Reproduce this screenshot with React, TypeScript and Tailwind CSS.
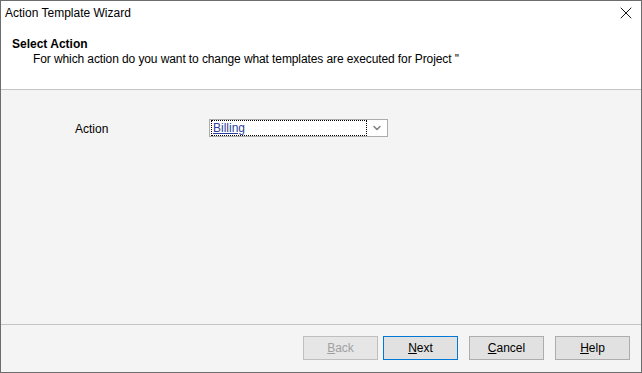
import { ChevronDown, X } from 'lucide-react';

const font = { fontFamily: '"Liberation Sans", Arial, sans-serif' };

function WizButton({ label, first, primary, disabled }: { label: string; first: string; primary?: boolean; disabled?: boolean }) {
  const rest = label.slice(1);
  return (
    <button
      disabled={disabled}
      className={`flex h-[24px] w-[75px] items-center justify-center border text-[12px] ${
        disabled
          ? 'border-[#bfbfbf] bg-[#e6e6e6] text-[#a0a0a0]'
          : primary
            ? 'border-[#0078d7] bg-[#e1e1e1] text-black'
            : 'border-[#adadad] bg-[#e1e1e1] text-black'
      }`}
    >
      <span>
        <span className="underline">{first}</span>
        {rest}
      </span>
    </button>
  );
}

export default function App() {
  return (
    <div style={font} className="flex h-[373px] w-[642px] flex-col border border-[#6d6d6d] bg-white text-[12px] text-black">
      {/* Title bar */}
      <div className="flex h-[24px] shrink-0 items-center justify-between pl-[4px] pr-[5px]">
        <span>Action Template Wizard</span>
        <X className="h-[20px] w-[20px] text-black" strokeWidth={1.1} />
      </div>

      {/* Header */}
      <div className="h-[65px] shrink-0 border-b border-[#c4c4c4] bg-white pl-[11px] pt-[12px]">
        <div className="text-[12px] font-bold leading-[14px]">Select Action</div>
        <div className="mt-[1px] pl-[21px] leading-[14px] tracking-[-0.1px]">For which action do you want to change what templates are executed for Project ''</div>
      </div>

      {/* Body */}
      <div className="flex-1 bg-[#f4f4f4] pl-[74px] pt-[27px]">
        <div className="flex items-center">
          <span className="w-[134px] pt-[3px]">Action</span>
          <div className="flex h-[18px] w-[179px] items-center border border-[#acacac] bg-white pl-[1px] pr-[4px]">
            <div className="flex h-[16px] flex-1 items-center border border-dotted border-black pl-[1px] text-[#2c3f9e] underline">
              Billing
            </div>
            <ChevronDown className="ml-[4px] h-[12px] w-[12px] text-[#808080]" strokeWidth={3} />
          </div>
        </div>
      </div>

      {/* Footer */}
      <div className="flex h-[48px] shrink-0 justify-end gap-[11px] border-t border-[#c4c4c4] bg-[#f4f4f4] pr-[11px] pt-[11px]">
        <div className="flex gap-[5px]">
          <WizButton label="Back" first="B" disabled />
          <WizButton label="Next" first="N" primary />
        </div>
        <WizButton label="Cancel" first="C" />
        <WizButton label="Help" first="H" />
      </div>
    </div>
  );
}
